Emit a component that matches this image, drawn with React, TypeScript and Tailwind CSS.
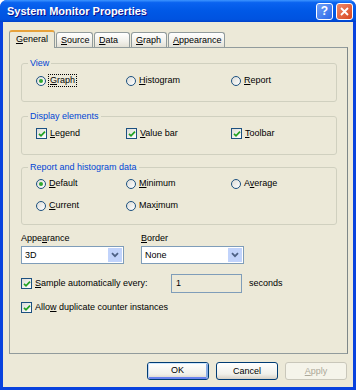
import React from "react";

// Small helper: text with one underlined access key
function AccessText({ text, u }: { text: string; u?: number }) {
	if (u === undefined) return <span>{text}</span>;
	return (
		<span>
			{text.slice(0, u)}
			<span className="underline underline-offset-[1px]">{text[u]}</span>
			{text.slice(u + 1)}
		</span>
	);
}

function Radio({ checked }: { checked?: boolean }) {
	return (
		<span className="w-[10px] h-[10px] rounded-full border border-[#1C5180] bg-[linear-gradient(135deg,#DCDCD7,#FFFFFF)] flex items-center justify-center shrink-0">
			{checked && <span className="w-[4px] h-[4px] rounded-full bg-[#2FA82F]" />}
		</span>
	);
}

function Checkbox() {
	return (
		<span className="w-[11px] h-[11px] border border-[#1C5180] bg-[linear-gradient(135deg,#DCDCD7,#FFFFFF)] flex items-center justify-center shrink-0">
			<svg width="8" height="8" viewBox="0 0 8 8">
				<path d="M1 3.8 L3 5.8 L7 1.6" stroke="#21A121" strokeWidth="1.7" fill="none" />
			</svg>
		</span>
	);
}

function RadioItem({ text, u, checked, focus }: { text: string; u?: number; checked?: boolean; focus?: boolean }) {
	return (
		<div className="flex items-center gap-[2px] h-[13px]">
			<Radio checked={checked} />
			<span className={focus ? "border border-dotted border-black px-px leading-[11px]" : "px-px"}>
				<AccessText text={text} u={u} />
			</span>
		</div>
	);
}

function CheckItem({ text, u }: { text: string; u?: number }) {
	return (
		<div className="flex items-center gap-[3px] h-[13px]">
			<Checkbox />
			<AccessText text={text} u={u} />
		</div>
	);
}

function Group({ title, height, children }: { title: string; height: string; children: React.ReactNode }) {
	return (
		<fieldset className={`border border-[#D0D0BF] rounded-[3px] ${height}`}>
			<legend className="ml-[6px] px-[2px] text-[#0046D5] leading-[13px]">{title}</legend>
			{children}
		</fieldset>
	);
}

function Select({ value }: { value: string }) {
	return (
		<div className="w-[103px] h-[18px] border border-[#7F9DB9] bg-white flex items-center justify-between pl-[3px] pr-[1px]">
			<span>{value}</span>
			<span className="w-[14px] h-[14px] bg-[#C1D3FB] flex items-center justify-center">
				<svg width="8" height="6" viewBox="0 0 8 6">
					<path d="M1 1.2 L4 4.2 L7 1.2" stroke="#4D6185" strokeWidth="1.8" fill="none" />
				</svg>
			</span>
		</div>
	);
}

function Button({ label, u, primary, disabled }: { label: string; u?: number; primary?: boolean; disabled?: boolean }) {
	if (disabled) {
		return (
			<div className="w-[62px] h-[18px] rounded-[3px] border border-[#C9C7BA] bg-[#F5F4EA] text-[#ACA899] flex items-center justify-center">
				<AccessText text={label} u={u} />
			</div>
		);
	}
	return (
		<div className="w-[62px] h-[18px] rounded-[3px] border border-[#003C74] bg-[linear-gradient(180deg,#FFFFFF,#F0F0EA_70%,#D6D0C5)] flex items-center justify-center">
			<div
				className={
					primary
						? "w-full h-full rounded-[2px] border-t border-l border-t-[#CEE7FF] border-l-[#BCD4F6] border-b-2 border-r-2 border-b-[#6982EE] border-r-[#89ADE4] flex items-center justify-center"
						: "w-full h-full flex items-center justify-center"
				}
			>
				<AccessText text={label} u={u} />
			</div>
		</div>
	);
}

const tabs = [
	{ label: "General", w: "w-[46px]", u: 0 },
	{ label: "Source", w: "w-[37px]", u: 0 },
	{ label: "Data", w: "w-[36px]", u: 0 },
	{ label: "Graph", w: "w-[36px]", u: 0 },
	{ label: "Appearance", w: "w-[57px]", u: 0 },
];

export default function App() {
	return (
		<div className="w-[356px] h-[390px] flex flex-col bg-[#0842DE] rounded-t-[7px] overflow-hidden text-black text-[9px] leading-[13px] font-['Liberation_Sans',Arial,sans-serif]">
			{/* Title bar */}
			<div className="h-[22px] shrink-0 flex items-center justify-between pl-[7px] pr-[3px] bg-[linear-gradient(180deg,#3D95FF_0%,#0A63F0_12%,#0058E6_50%,#0053E0_88%,#0040C8_100%)]">
				<span className="text-white font-bold text-[11px] [text-shadow:1px_1px_#0F1089]">System Monitor Properties</span>
				<div className="flex items-center gap-[3px]">
					<div className="w-[17px] h-[17px] rounded-[3px] border border-white bg-[linear-gradient(135deg,#6FA0F8,#2B68E8)] flex items-center justify-center text-white font-bold text-[12px]">
						?
					</div>
					<div className="w-[17px] h-[17px] rounded-[3px] border border-white bg-[linear-gradient(135deg,#F08A6A,#D8461F)] flex items-center justify-center">
						<svg width="9" height="9" viewBox="0 0 9 9">
							<path d="M1 1 L8 8 M8 1 L1 8" stroke="white" strokeWidth="1.8" />
						</svg>
					</div>
				</div>
			</div>

			{/* Body */}
			<div className="flex-1 mx-[3px] mb-[3px] bg-[#ECE9D8] flex flex-col pt-[8px] pl-[6px] pr-[5px]">
				{/* Tabs */}
				<div className="flex items-end h-[17px] relative z-10">
					{tabs.map((t, i) =>
						i === 0 ? (
							<div
								key={t.label}
								className={`${t.w} h-[18px] -mb-px bg-[#ECE9D8] border-x border-[#919B9C] border-t-[2px] border-t-[#E7A23A] rounded-t-[3px] flex items-center justify-center pb-[2px]`}
							>
								<AccessText text={t.label} u={t.u} />
							</div>
						) : (
							<div
								key={t.label}
								className={`${t.w} h-[15px] ml-px border border-b-0 border-[#919B9C] rounded-t-[3px] bg-[linear-gradient(180deg,#FFFFFF,#F1F0EA_60%,#E3E1D6)] flex items-center pl-[4px]`}
							>
								<AccessText text={t.label} u={t.u} />
							</div>
						)
					)}
				</div>

				{/* Tab panel */}
				<div className="h-[307px] border border-[#919B9C] border-r-[#7E8788] bg-[#ECE9D8] pt-[9px] pl-[11px] pr-[10px] flex flex-col">
					<Group title="View" height="h-[45px]">
						<div className="grid grid-cols-[90px_105px_1fr] pl-[14px] mt-[4px]">
							<RadioItem text="Graph" u={0} checked focus />
							<RadioItem text="Histogram" u={0} />
							<RadioItem text="Report" u={0} />
						</div>
					</Group>

					<div className="mt-[8px]">
						<Group title="Display elements" height="h-[45px]">
							<div className="grid grid-cols-[90px_105px_1fr] pl-[14px] mt-[4px]">
								<CheckItem text="Legend" u={0} />
								<CheckItem text="Value bar" u={0} />
								<CheckItem text="Toolbar" u={0} />
							</div>
						</Group>
					</div>

					<div className="mt-[6px]">
						<Group title="Report and histogram data" height="h-[64px]">
							<div className="grid grid-cols-[90px_105px_1fr] gap-y-[9px] pl-[14px] mt-[3px]">
								<RadioItem text="Default" u={0} checked />
								<RadioItem text="Minimum" u={0} />
								<RadioItem text="Average" u={1} />
								<RadioItem text="Current" u={0} />
								<RadioItem text="Maximum" u={3} />
							</div>
						</Group>
					</div>

					{/* Appearance / Border selects */}
					<div className="flex gap-[17px] mt-[7px]">
						<div className="flex flex-col gap-[1px]">
							<AccessText text="Appearance" u={4} />
							<Select value="3D" />
						</div>
						<div className="flex flex-col gap-[1px]">
							<AccessText text="Border" u={0} />
							<Select value="None" />
						</div>
					</div>

					{/* Sample interval */}
					<div className="flex items-center mt-[10px] h-[19px]">
						<div className="w-[150px]">
							<CheckItem text="Sample automatically every:" u={0} />
						</div>
						<div className="w-[71px] h-[19px] border border-[#7F9DB9] bg-[#ECE9D8] flex items-center pl-[4px]">1</div>
						<span className="ml-[7px]">seconds</span>
					</div>

					<div className="mt-[8px]">
						<CheckItem text="Allow duplicate counter instances" u={4} />
					</div>
				</div>

				{/* Dialog buttons */}
				<div className="flex justify-end gap-[7px] mt-[8px] pr-[1px]">
					<Button label="OK" primary />
					<Button label="Cancel" />
					<Button label="Apply" u={0} disabled />
				</div>
			</div>
		</div>
	);
}
